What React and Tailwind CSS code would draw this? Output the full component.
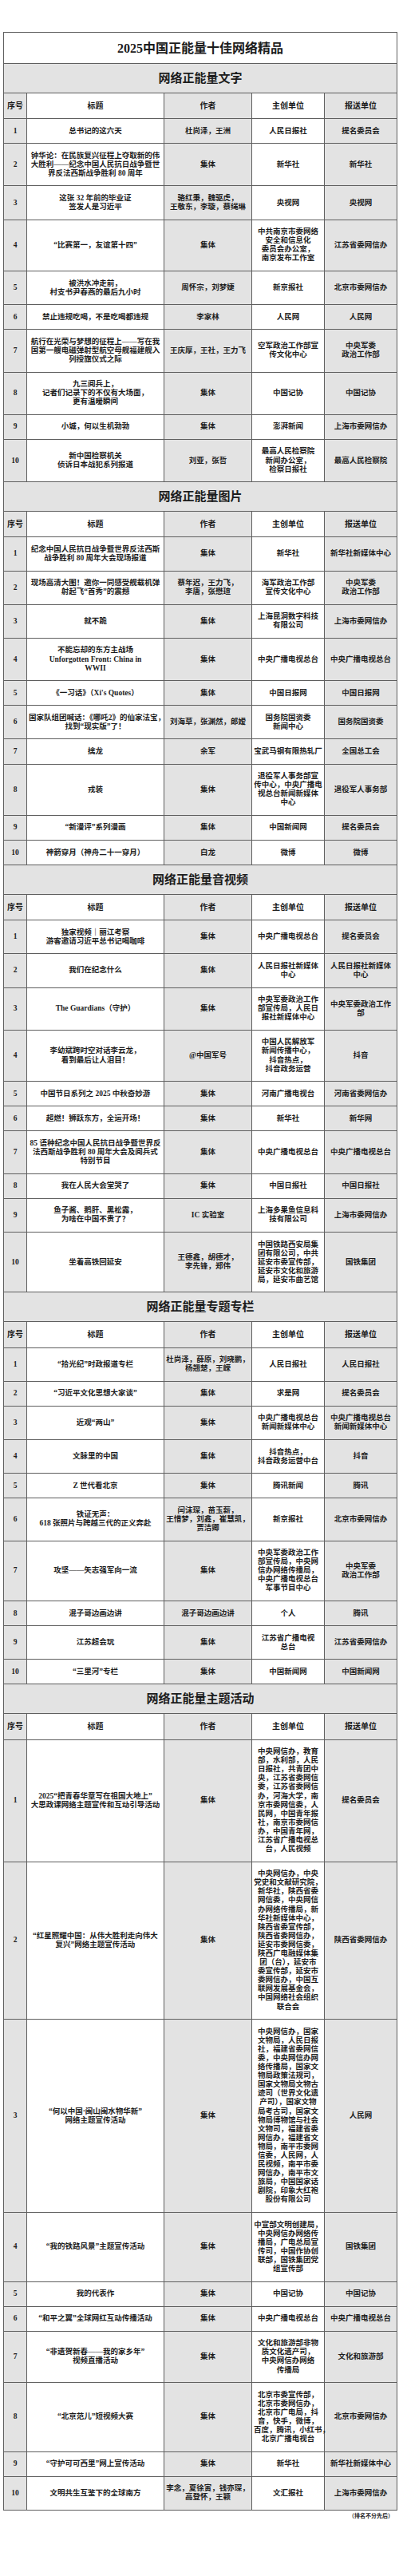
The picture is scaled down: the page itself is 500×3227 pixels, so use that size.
import React from 'react';

// 2025 中国正能量十佳网络精品 — full results table
const sections = [
    {
        name: '网络正能量文字',
        rows: [
            ['总书记的这六天', '杜尚泽，王洲', '人民日报社', '提名委员会'],
            ['钟华论：在民族复兴征程上夺取新的伟\n大胜利——纪念中国人民抗日战争暨世\n界反法西斯战争胜利 80 周年', '集体', '新华社', '新华社'],
            ['这张 32 年前的毕业证\n签发人是习近平', '骆红秉，魏驱虎，\n王敬东，李璇，蔡绳琳', '央视网', '央视网'],
            ['“比赛第一，友谊第十四”', '集体', '中共南京市委网络\n安全和信息化\n委员会办公室，\n南京发布工作室', '江苏省委网信办'],
            ['被洪水冲走前，\n村支书尹春燕的最后九小时', '周怀宗，刘梦婕', '新京报社', '北京市委网信办'],
            ['禁止违规吃喝，不是吃喝都违规', '李家林', '人民网', '人民网'],
            ['航行在光荣与梦想的征程上——写在我\n国第一艘电磁弹射型航空母舰福建舰入\n列授旗仪式之际', '王庆厚，王社，王力飞', '空军政治工作部宣\n传文化中心', '中央军委\n政治工作部'],
            ['九三阅兵上，\n记者们记录下的不仅有大场面，\n更有温暖瞬间', '集体', '中国记协', '中国记协'],
            ['小城，何以生机勃勃', '集体', '澎湃新闻', '上海市委网信办'],
            ['新中国检察机关\n侦诉日本战犯系列报道', '刘亚，张哲', '最高人民检察院\n新闻办公室，\n检察日报社', '最高人民检察院'],
        ],
    },
    {
        name: '网络正能量图片',
        rows: [
            ['纪念中国人民抗日战争暨世界反法西斯\n战争胜利 80 周年大会现场报道', '集体', '新华社', '新华社新媒体中心'],
            ['现场高清大图！邀你一同感受舰载机弹\n射起飞“首秀”的震撼', '蔡年迟，王力飞，\n李唐，张懋瑄', '海军政治工作部\n宣传文化中心', '中央军委\n政治工作部'],
            ['就不跪', '集体', '上海昆洞数字科技\n有限公司', '上海市委网信办'],
            ['不能忘却的东方主战场\nUnforgotten Front: China in\nWWII', '集体', '中央广播电视总台', '中央广播电视总台'],
            ['《一习话》（Xi\'s Quotes）', '集体', '中国日报网', '中国日报网'],
            ['国家队组团喊话：《哪吒2》的仙家法宝，\n找到“现实版”了！', '刘海草，张渊然，郎嫒', '国务院国资委\n新闻中心', '国务院国资委'],
            ['擒龙', '余军', '宝武马钢有限热轧厂', '全国总工会'],
            ['戎装', '集体', '退役军人事务部宣\n传中心，中央广播电\n视总台新闻新媒体\n中心', '退役军人事务部'],
            ['“新漫评”系列漫画', '集体', '中国新闻网', '提名委员会'],
            ['神箭穿月（神舟二十一穿月）', '白龙', '微博', '微博'],
        ],
    },
    {
        name: '网络正能量音视频',
        rows: [
            ['独家视频｜丽江考察\n游客邀请习近平总书记喝咖啡', '集体', '中央广播电视总台', '提名委员会'],
            ['我们在纪念什么', '集体', '人民日报社新媒体\n中心', '人民日报社新媒体\n中心'],
            ['The Guardians（守护）', '集体', '中央军委政治工作\n部宣传局，人民日\n报社新媒体中心', '中央军委政治工作\n部'],
            ['李幼斌跨时空对话李云龙，\n看到最后让人泪目！', '@中国军号', '中国人民解放军\n新闻传播中心，\n抖音热点，\n抖音政务运营', '抖音'],
            ['中国节日系列之 2025 中秋奇妙游', '集体', '河南广播电视台', '河南省委网信办'],
            ['超燃！狮跃东方，全运开场！', '集体', '新华社', '新华网'],
            ['85 语种纪念中国人民抗日战争暨世界反\n法西斯战争胜利 80 周年大会及阅兵式\n特别节目', '集体', '中央广播电视总台', '中央广播电视总台'],
            ['我在人民大会堂哭了', '集体', '中国日报社', '中国日报社'],
            ['鱼子酱、鹅肝、黑松露，\n为啥在中国不贵了？', 'IC 实验室', '上海多果鱼信息科\n技有限公司', '上海市委网信办'],
            ['坐着高铁回延安', '王德鑫，胡德才，\n李先锋，郑伟', '中国铁路西安局集\n团有限公司，中共\n延安市委宣传部，\n延安市文化和旅游\n局，延安市曲艺馆', '国铁集团'],
        ],
    },
    {
        name: '网络正能量专题专栏',
        rows: [
            ['“拾光纪”时政报道专栏', '杜尚泽，薛原，刘晓鹏，\n杨翘楚，王嵘', '人民日报社', '人民日报社'],
            ['“习近平文化思想大家谈”', '集体', '求是网', '提名委员会'],
            ['近观“两山”', '集体', '中央广播电视总台\n新闻新媒体中心', '中央广播电视总台\n新闻新媒体中心'],
            ['文脉里的中国', '集体', '抖音热点，\n抖音政务运营中台', '抖音'],
            ['Z 世代看北京', '集体', '腾讯新闻', '腾讯'],
            ['铁证无声：\n618 张照片与跨越三代的正义奔赴', '闫沫琛，苗玉薪，\n王惜梦，刘鑫，崔慧凯，\n贾洁卿', '新京报社', '北京市委网信办'],
            ['攻坚——矢志强军向一流', '集体', '中央军委政治工作\n部宣传局，中央网\n信办网络传播局，\n中央广播电视总台\n军事节目中心', '中央军委\n政治工作部'],
            ['混子哥边画边讲', '混子哥边画边讲', '个人', '腾讯'],
            ['江苏超会玩', '集体', '江苏省广播电视\n总台', '江苏省委网信办'],
            ['“三里河”专栏', '集体', '中国新闻网', '中国新闻网'],
        ],
    },
    {
        name: '网络正能量主题活动',
        rows: [
            ['2025“把青春华章写在祖国大地上”\n大思政课网络主题宣传和互动引导活动', '集体', '中央网信办，教育\n部，水利部，人民\n日报社，共青团中\n央，江苏省委网信\n委，江苏省委网信\n办，河海大学，南\n京市委网信委，人\n民网，中国青年报\n社，南京市委网信\n办，中国青年网，\n江苏省广播电视总\n台，人民视频', '提名委员会'],
            ['“红星照耀中国：从伟大胜利走向伟大\n复兴”网络主题宣传活动', '集体', '中央网信办，中央\n党史和文献研究院，\n新华社，陕西省委\n网信委，中央网信\n办网络传播局，新\n华社新媒体中心，\n陕西省委宣传部，\n陕西省委网信办，\n延安市委网信委，\n陕西广电融媒体集\n团（台），延安市\n委宣传部，延安市\n委网信办，中国互\n联网发展基金会，\n中国网络社会组织\n联合会', '陕西省委网信办'],
            ['“何以中国·闽山闽水物华新”\n网络主题宣传活动', '集体', '中央网信办，国家\n文物局，人民日报\n社，福建省委网信\n委，中央网信办网\n络传播局，国家文\n物局政策法规司，\n国家文物局文物古\n迹司（世界文化遗\n产司），国家文物\n局考古司，国家文\n物局博物馆与社会\n文物司，福建省委\n网信办，福建省文\n物局，南平市委网\n信委，人民网，人\n民视频，南平市委\n网信办，南平市文\n旅局，中国国家话\n剧院，印象大红袍\n股份有限公司', '人民网'],
            ['“我的铁路风景”主题宣传活动', '集体', '中宣部文明创建局，\n中央网信办网络传\n播局，广电总局宣\n传司，中国作协创\n联部，国铁集团党\n组宣传部', '国铁集团'],
            ['我的代表作', '集体', '中国记协', '中国记协'],
            ['“和平之翼”全球网红互动传播活动', '集体', '中央广播电视总台', '中央广播电视总台'],
            ['“非遗贺新春——我的家乡年”\n视频直播活动', '集体', '文化和旅游部非物\n质文化遗产司，\n中央网信办网络\n传播局', '文化和旅游部'],
            ['“北京范儿”短视频大赛', '集体', '北京市委宣传部，\n北京市委网信办，\n北京市广电局，抖\n音，快手，微博，\n百度，腾讯，小红书，\n北京广播电视台', '北京市委网信办'],
            ['“守护可可西里”网上宣传活动', '集体', '新华社', '新华社新媒体中心'],
            ['文明共生互鉴下的全球南方', '李念，夏徐寅，钱亦琛，\n高登怀，王颖', '文汇报社', '上海市委网信办'],
        ],
    },
];

const headers = ['序号', '标题', '作者', '主创单位', '报送单位'];

// columns alternate grey / white
const shade = ['bg-[#e3e3e3]', 'bg-white', 'bg-[#e3e3e3]', 'bg-white', 'bg-[#e3e3e3]'];

const cellBase = 'border border-[#5f5f5f] px-[2px] text-center align-middle whitespace-pre';

const App = () => {
    return (
        <div
            className="w-[500px] min-h-[3227px] bg-white text-[#1c1c1c] font-bold"
            style={{ fontFamily: '"Liberation Serif", "Noto Sans CJK SC", serif' }}
        >
            <table className="table-fixed border-collapse w-[493px] ml-[4px] mt-[40px]">
                <colgroup>
                    <col className="w-[29px]" />
                    <col className="w-[172px]" />
                    <col className="w-[110px]" />
                    <col className="w-[91px]" />
                    <col className="w-[91px]" />
                </colgroup>
                <tbody>
                    <tr>
                        <td colSpan={5} className={`${cellBase} bg-white py-[9.5px] text-[16px] leading-[19px]`}>
                            2025中国正能量十佳网络精品
                        </td>
                    </tr>
                    {sections.map((section) => (
                        <React.Fragment key={section.name}>
                            <tr>
                                <td colSpan={5} className={`${cellBase} bg-[#e3e3e3] py-[9.5px] text-[15px] leading-[17px]`}>
                                    {section.name}
                                </td>
                            </tr>
                            <tr>
                                {headers.map((h, i) => (
                                    <td key={h} className={`${cellBase} ${shade[i]} py-[10px] text-[10px] leading-[11.1px]`}>
                                        {h}
                                    </td>
                                ))}
                            </tr>
                            {section.rows.map((row, idx) => (
                                <tr key={idx}>
                                    {[String(idx + 1), ...row].map((text, i) => (
                                        <td key={i} className={`${cellBase} ${shade[i]} py-[9.5px] text-[9.5px] leading-[11.1px]`}>
                                            {text}
                                        </td>
                                    ))}
                                </tr>
                            ))}
                        </React.Fragment>
                    ))}
                </tbody>
            </table>
            <p className="w-[493px] ml-[4px] pr-[4px] mt-[3px] text-right text-[7px] leading-[9px]">（排名不分先后）</p>
        </div>
    );
};

export default App;
